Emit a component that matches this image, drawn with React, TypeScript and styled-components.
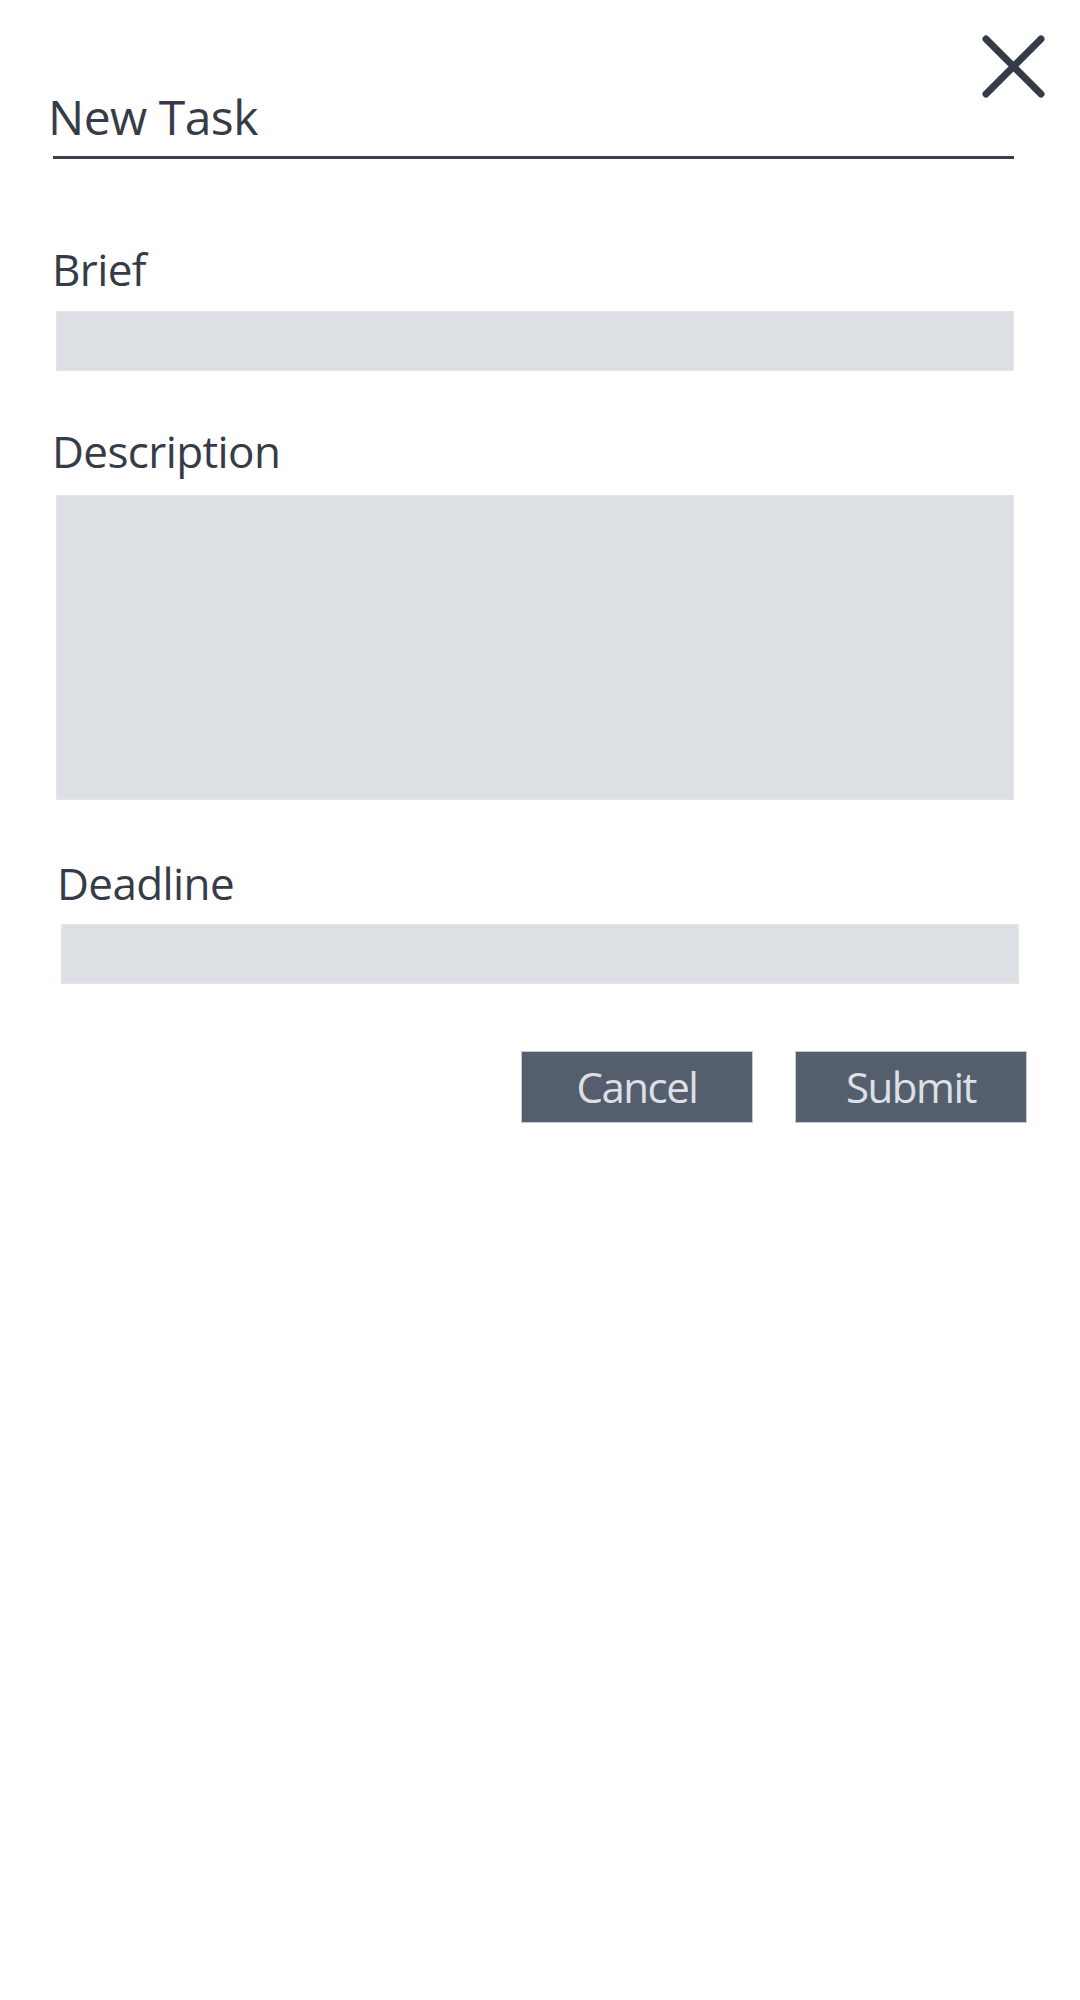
import React from 'react';
import styled, { createGlobalStyle } from 'styled-components';

const GlobalStyle = createGlobalStyle`
  body {
    margin: 0;
    background: #ffffff;
    font-family: "Open Sans", "Noto Sans", sans-serif;
    color: #363c47;
  }
`;

const CloseIcon: React.FC = () => (
  <svg width="63" height="63" viewBox="0 0 63 63" fill="none">
    <path d="M4 4 L59 59 M59 4 L4 59" stroke="#363c47" strokeWidth="7" strokeLinecap="round" />
  </svg>
);

const App: React.FC = () => {
  return (
    <>
      <GlobalStyle />
      <Page>
        <Form onSubmit={(e) => e.preventDefault()}>
          <Header>
            <TitleText>New Task</TitleText>
            <CloseButton type="button" aria-label="Close">
              <CloseIcon />
            </CloseButton>
          </Header>

          <Field $top={88} $gap={20}>
            <Label htmlFor="brief">Brief</Label>
            <TextInput id="brief" type="text" />
          </Field>

          <Field $top={58} $gap={22}>
            <Label htmlFor="description">Description</Label>
            <TextArea id="description" />
          </Field>

          <Field $top={61} $gap={19} $shift={5}>
            <Label htmlFor="deadline">Deadline</Label>
            <TextInput id="deadline" type="text" />
          </Field>

          <Actions>
            <ActionButton type="button">Cancel</ActionButton>
            <ActionButton type="submit">Submit</ActionButton>
          </Actions>
        </Form>
      </Page>
    </>
  );
};

const Page = styled.div`
  width: 1080px;
  min-height: 2000px;
  box-sizing: border-box;
  padding-left: 56px;
`;

const Form = styled.form`
  display: flex;
  flex-direction: column;
  width: 958px;
`;

const Header = styled.div`
  position: relative;
  padding-top: 93px;
  margin-left: -3px;
`;

const TitleText = styled.h1`
  margin: 0;
  padding-bottom: 15px;
  border-bottom: 3px solid #3a404b;
  font-size: 48px;
  font-weight: 400;
  line-height: 1;
  letter-spacing: -0.5px;
  text-indent: -5px;
`;

const CloseButton = styled.button`
  position: absolute;
  top: 35px;
  right: -31px;
  width: 63px;
  height: 63px;
  padding: 0;
  border: none;
  background: none;
  cursor: pointer;

  svg {
    display: block;
  }
`;

const Field = styled.div<{ $top: number; $gap?: number; $shift?: number }>`
  display: flex;
  flex-direction: column;
  gap: ${({ $gap }) => $gap ?? 19}px;
  margin-top: ${({ $top }) => $top}px;
  margin-left: ${({ $shift }) => $shift ?? 0}px;
  margin-right: ${({ $shift }) => -($shift ?? 0)}px;
`;

const Label = styled.label`
  font-size: 44px;
  line-height: 1;
  letter-spacing: -0.6px;
  margin-left: -4px;
`;

const TextInput = styled.input`
  box-sizing: border-box;
  width: 100%;
  height: 60px;
  margin: 0;
  padding: 0 12px;
  border: 1px solid #e3e5e9;
  background: #dcdfe4;
  font-family: inherit;
  font-size: 28px;
  color: #363c47;
  outline: none;
`;

const TextArea = styled.textarea`
  box-sizing: border-box;
  width: 100%;
  height: 305px;
  margin: 0;
  padding: 12px;
  border: 1px solid #e3e5e9;
  background: #dcdfe4;
  font-family: inherit;
  font-size: 28px;
  color: #363c47;
  resize: none;
  outline: none;
`;

const Actions = styled.div`
  display: flex;
  justify-content: flex-end;
  gap: 42px;
  width: 971px;
  margin-top: 67px;
`;

const ActionButton = styled.button`
  width: 232px;
  height: 72px;
  padding: 0;
  border: 1px solid #c6cad1;
  background: #555e6d;
  color: #dde0e5;
  font-family: "Open Sans", "Noto Sans", sans-serif;
  font-size: 42px;
  line-height: 1;
  letter-spacing: -1.5px;
  cursor: pointer;
`;

export default App;
